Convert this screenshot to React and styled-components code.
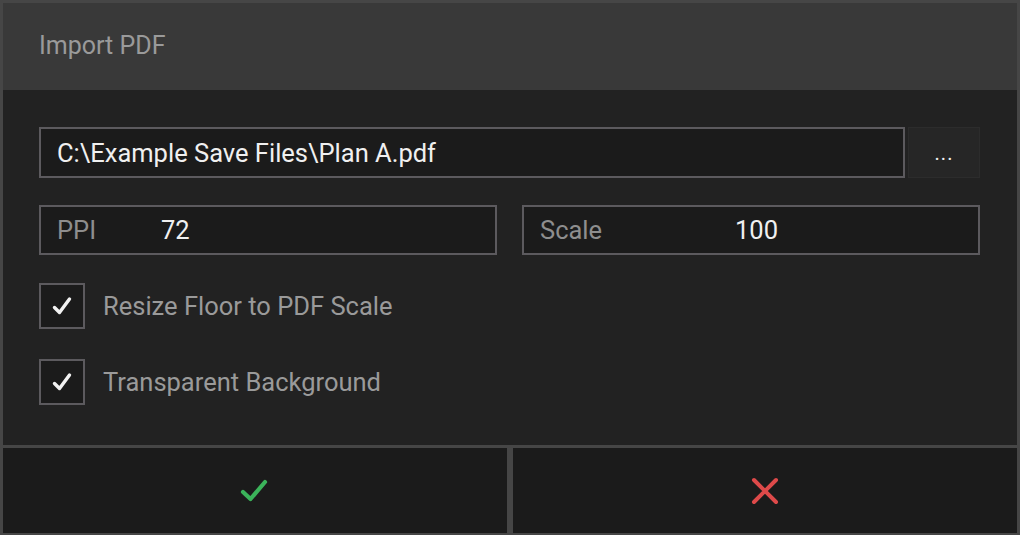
import styled, { createGlobalStyle } from "styled-components";

const Global = createGlobalStyle`
  html, body {
    margin: 0;
    padding: 0;
    background: #464646;
  }
  * {
    box-sizing: border-box;
  }
`;

const Frame = styled.div`
  width: 1020px;
  height: 535px;
  background: #464646;
  padding: 3px 3px 2px 3px;
  display: flex;
  flex-direction: column;
  font-family: Roboto, "Liberation Sans", sans-serif;
`;

const Header = styled.header`
  height: 87px;
  background: #393939;
  display: flex;
  align-items: center;
  padding-left: 36px;
  padding-bottom: 2px;
  font-size: 25px;
  color: #9a9a9a;
`;

const Body = styled.main`
  flex: 1;
  background: #222222;
  padding: 37px 37px 0 36px;
  display: flex;
  flex-direction: column;
`;

const FileRow = styled.div`
  display: flex;
  gap: 3px;
  height: 51px;
`;

const Field = styled.div`
  flex: 1;
  display: flex;
  align-items: center;
  background: #1b1b1b;
  border: 2px solid #5c5a5e;
  padding-left: 16px;
  font-size: 25.5px;
  color: #f0f0f0;
`;

const BrowseButton = styled.button`
  width: 72px;
  background: #262626;
  border: 1px solid #2c2c2c;
  color: #f0f0f0;
  font-family: inherit;
  font-size: 20px;
  letter-spacing: 1px;
  padding: 0;
`;

const NumberRow = styled.div`
  display: grid;
  grid-template-columns: 1fr 1fr;
  gap: 25px;
  height: 50px;
  margin-top: 27px;
`;

const Label = styled.span`
  color: #8e8e8e;
  width: ${(p) => p.$width}px;
`;

const Value = styled.span`
  color: #f0f0f0;
`;

const CheckRow = styled.label`
  display: flex;
  align-items: center;
  gap: 18px;
  margin-top: ${(p) => p.$top}px;
  font-size: 25.5px;
  color: #9a9a9a;
`;

const Box = styled.span`
  width: 46px;
  height: 46px;
  background: #1b1b1b;
  border: 2px solid #5c5a5e;
  display: flex;
  align-items: center;
  justify-content: center;
`;

const Footer = styled.footer`
  display: grid;
  grid-template-columns: 1fr 1fr;
  gap: 6px;
  padding-top: 3px;
  height: 88px;
`;

const ActionButton = styled.button`
  background: #1b1b1b;
  border: none;
  display: flex;
  align-items: center;
  justify-content: center;
  padding: 0;
`;

function Tick() {
  return (
    <svg width="22" height="20" viewBox="0 0 22 20">
      <path d="M3.5 11.5 L8.5 16.5 L18.5 3" fill="none" stroke="#f2f2f2" strokeWidth="3.4" strokeLinecap="round" strokeLinejoin="round" />
    </svg>
  );
}

export default function App() {
  return (
    <>
      <Global />
      <Frame>
        <Header>Import PDF</Header>
        <Body>
          <FileRow>
            <Field>C:\Example Save Files\Plan A.pdf</Field>
            <BrowseButton>...</BrowseButton>
          </FileRow>
          <NumberRow>
            <Field>
              <Label $width={104}>PPI</Label>
              <Value>72</Value>
            </Field>
            <Field>
              <Label $width={195}>Scale</Label>
              <Value>100</Value>
            </Field>
          </NumberRow>
          <CheckRow $top={28}>
            <Box><Tick /></Box>
            Resize Floor to PDF Scale
          </CheckRow>
          <CheckRow $top={30}>
            <Box><Tick /></Box>
            Transparent Background
          </CheckRow>
        </Body>
        <Footer>
          <ActionButton aria-label="Confirm">
            <svg width="32" height="28" viewBox="0 0 32 28">
              <path d="M4 15 L11.5 22 L26 5" fill="none" stroke="#3bb35a" strokeWidth="4.2" strokeLinecap="round" strokeLinejoin="round" />
            </svg>
          </ActionButton>
          <ActionButton aria-label="Cancel">
            <svg width="28" height="28" viewBox="0 0 28 28">
              <path d="M3 3 L25 25 M25 3 L3 25" fill="none" stroke="#de4a4a" strokeWidth="4" strokeLinecap="round" />
            </svg>
          </ActionButton>
        </Footer>
      </Frame>
    </>
  );
}
